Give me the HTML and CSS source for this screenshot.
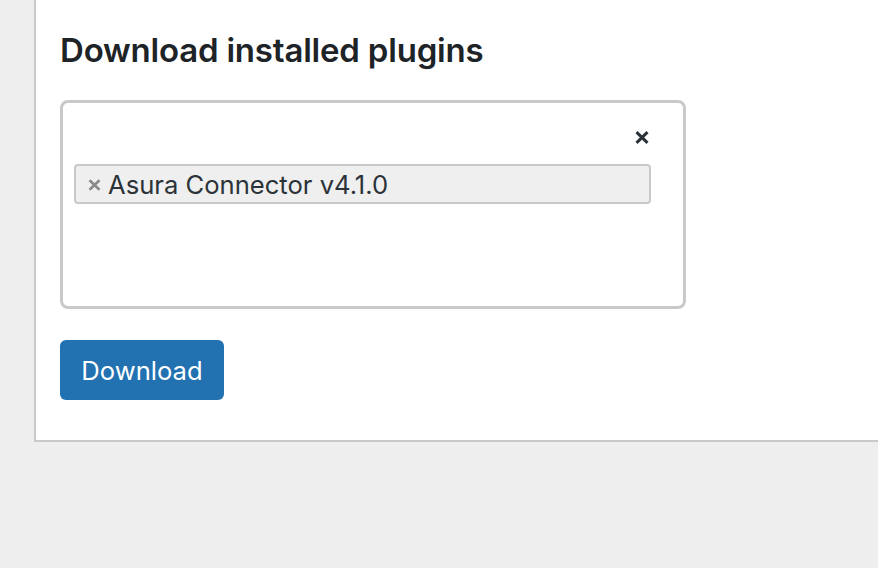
FILE: index.html
```html
<!DOCTYPE html>
<html>
<head>
<meta charset="utf-8">
<link rel="stylesheet" href="styles.css">
</head>
<body>
<div class="page">
  <div class="panel">
    <h2 class="title">Download installed plugins</h2>
    <div class="select">
      <div class="select-top">
        <svg class="clear" width="14" height="13" viewBox="0 0 14 13"><path d="M1.5 1.2 L12.5 11.8 M12.5 1.2 L1.5 11.8" stroke="#2c3338" stroke-width="3" stroke-linecap="butt"/></svg>
      </div>
      <div class="chip">
        <svg class="chip-x" width="13" height="12" viewBox="0 0 13 12"><path d="M1.5 1.2 L11.5 10.8 M11.5 1.2 L1.5 10.8" stroke="#8a8a8a" stroke-width="2.6"/></svg>
        <span class="chip-label">Asura Connector v4.1.0</span>
      </div>
    </div>
    <button class="btn">Download</button>
  </div>
</div>
</body>
</html>
```
FILE: styles.css
```css
html, body {
  margin: 0;
  padding: 0;
  background: #eeeeee;
  font-family: Inter, "Noto Sans", sans-serif;
}
.page {
  height: 568px;
}
.panel {
  margin-left: 34px;
  height: 442px;
  box-sizing: border-box;
  background: #ffffff;
  border-left: 2px solid #c9c9c9;
  border-bottom: 2px solid #c9c9c9;
  padding: 30px 0 0 24px;
}
.title {
  margin: 0;
  font-size: 33px;
  font-weight: 600;
  color: #1d2327;
  line-height: 40px;
  letter-spacing: -0.2px;
}
.select {
  margin-top: 30px;
  width: 626px;
  height: 209px;
  box-sizing: border-box;
  border: 3px solid #c9c9c9;
  border-radius: 8px;
  background: #fff;
  padding: 0 32px 0 11px;
}
.select-top {
  height: 61px;
  display: flex;
  justify-content: flex-end;
  align-items: flex-end;
}
.clear {
  display: block;
  margin-bottom: 20px;
  margin-right: 2px;
}
.chip {
  height: 40px;
  box-sizing: border-box;
  border: 2px solid #c9c9c9;
  border-radius: 4px;
  background: #efefef;
  display: flex;
  align-items: center;
  padding-left: 12px;
}
.chip-x {
  display: block;
  margin-right: 7px;
  margin-top: 2px;
}
.chip-label {
  font-size: 25.6px;
  color: #2c3338;
}
.btn {
  margin-top: 31px;
  display: block;
  width: 164px;
  height: 60px;
  border: none;
  border-radius: 6px;
  background: #2271b1;
  color: #fff;
  font-family: Inter, "Noto Sans", sans-serif;
  font-size: 25.6px;
  padding: 0;
}
```
